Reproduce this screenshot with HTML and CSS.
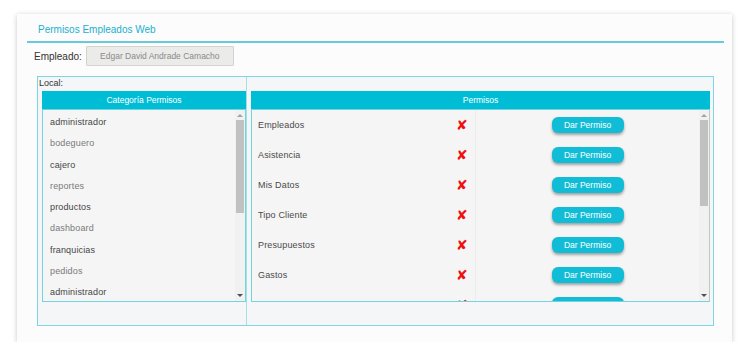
FILE: index.html
```html
<!DOCTYPE html>
<html lang="es">
<head>
  <meta charset="UTF-8" />
  <title>Permisos Empleados Web</title>
  <link rel="stylesheet" href="styles.css">
</head>
<body>

  <div class="card">
    <div class="card-title">Permisos Empleados Web</div>

    <div class="employee-row">
      <span class="employee-label">Empleado:</span>
      <button class="employee-btn">Edgar David Andrade Camacho</button>
    </div>

    <div class="local-box">
      <div class="col col-left">
        <div class="local-label">Local:</div>
        <div class="panel-head">Categoría Permisos</div>
        <div class="list list-cats">
          <div class="list-body">
            <div class="cat">administrador</div>
            <div class="cat">bodeguero</div>
            <div class="cat">cajero</div>
            <div class="cat">reportes</div>
            <div class="cat">productos</div>
            <div class="cat">dashboard</div>
            <div class="cat">franquicias</div>
            <div class="cat">pedidos</div>
            <div class="cat">administrador</div>
          </div>
          <div class="scrollbar">
            <span class="arrow-up"></span>
            <div class="track"><div class="thumb thumb-cats"></div></div>
            <span class="arrow-down"></span>
          </div>
        </div>
      </div>

      <div class="col col-right">
        <div class="panel-head">Permisos</div>
        <div class="list list-perms">
          <div class="list-body">
            <div class="perm-row">
              <span class="perm-name">Empleados</span>
              <span class="perm-state">&#10008;</span>
              <span class="perm-action"><button class="give-btn">Dar Permiso</button></span>
            </div>
            <div class="perm-row">
              <span class="perm-name">Asistencia</span>
              <span class="perm-state">&#10008;</span>
              <span class="perm-action"><button class="give-btn">Dar Permiso</button></span>
            </div>
            <div class="perm-row">
              <span class="perm-name">Mis Datos</span>
              <span class="perm-state">&#10008;</span>
              <span class="perm-action"><button class="give-btn">Dar Permiso</button></span>
            </div>
            <div class="perm-row">
              <span class="perm-name">Tipo Cliente</span>
              <span class="perm-state">&#10008;</span>
              <span class="perm-action"><button class="give-btn">Dar Permiso</button></span>
            </div>
            <div class="perm-row">
              <span class="perm-name">Presupuestos</span>
              <span class="perm-state">&#10008;</span>
              <span class="perm-action"><button class="give-btn">Dar Permiso</button></span>
            </div>
            <div class="perm-row">
              <span class="perm-name">Gastos</span>
              <span class="perm-state">&#10008;</span>
              <span class="perm-action"><button class="give-btn">Dar Permiso</button></span>
            </div>
            <div class="perm-row">
              <span class="perm-name">Mi Perfil</span>
              <span class="perm-state">&#10008;</span>
              <span class="perm-action"><button class="give-btn">Dar Permiso</button></span>
            </div>
          </div>
          <div class="scrollbar">
            <span class="arrow-up"></span>
            <div class="track"><div class="thumb thumb-perms"></div></div>
            <span class="arrow-down"></span>
          </div>
        </div>
      </div>
    </div>
  </div>

</body>
</html>
```

FILE: styles.css
```css
body {
  margin: 0;
  background: #ffffff;
  font-family: "Liberation Sans", Arial, sans-serif;
  color: #333;
}

.card {
  width: 705px;
  margin: 14px 0 0 17px;
  padding: 0 0 16px 10px;
  background: #fcfcfc;
  box-shadow: 0 1px 5px rgba(0, 0, 0, 0.22);
}

.card-title {
  width: 686px;
  padding: 9px 0 5px 11px;
  font-size: 10px;
  line-height: 13px;
  color: #19b0cf;
  border-bottom: 2px solid #66cbdc;
}

.employee-row {
  display: flex;
  align-items: center;
  gap: 4px;
  margin-top: 3px;
  padding-left: 7px;
  height: 20px;
}

.employee-label {
  font-size: 10px;
  color: #333;
}

.employee-btn {
  width: 148px;
  height: 20px;
  padding: 0;
  font-family: inherit;
  font-size: 8.5px;
  color: #8a8a8a;
  background: #ebebe9;
  border: 1px solid #d2d2d0;
  border-radius: 1px;
}

/* caja Local */
.local-box {
  display: grid;
  grid-template-columns: 209px 1fr;
  width: 675px;
  margin: 10px 0 0 10px;
  background: #f4f6f7;
  border: 1px solid #7dd6e2;
}

.col {
  padding-bottom: 23px;
}

.col-left {
  border-right: 1px solid #a6dfe8;
}

.col-right {
  padding-top: 14px;
  padding-right: 3px;
}

.local-label {
  height: 14px;
  padding-left: 1px;
  font-size: 9px;
  line-height: 13px;
  color: #333;
}

.panel-head {
  height: 18px;
  margin-left: 4px;
  background: #00bdd6;
  color: #fff;
  font-size: 8.5px;
  line-height: 18px;
  text-align: center;
}

.col-left .panel-head,
.col-left .list {
  width: 204px;
}

.list {
  display: flex;
  height: 193px;
  margin-left: 4px;
  box-sizing: border-box;
  background: #f5f5f5;
  border: 1px solid #74d3e0;
  overflow: hidden;
}

.list-perms {
  border-right-color: #c4c4c4;
}

.list-body {
  flex: 1;
  overflow: hidden;
}

.list-cats .list-body {
  padding-top: 2px;
}

.cat {
  height: 21.3px;
  line-height: 21.3px;
  padding-left: 7px;
  font-size: 9px;
  letter-spacing: 0.15px;
  color: #454545;
}

.cat:nth-child(even) {
  color: #7a7a7a;
}

.perm-row {
  display: grid;
  grid-template-columns: 1fr 24px 224px;
  height: 30px;
  align-items: center;
}

.perm-name {
  padding-left: 6px;
  font-size: 9px;
  letter-spacing: 0.15px;
  color: #4a4a4a;
}

.perm-state {
  font-family: "DejaVu Sans", sans-serif;
  font-size: 14px;
  line-height: 30px;
  color: #f01010;
  padding-left: 5px;
}

.perm-action {
  display: flex;
  justify-content: center;
  align-items: center;
  height: 30px;
  border-left: 1px solid #ececec;
}

.give-btn {
  width: 72px;
  height: 16px;
  padding: 0;
  font-family: inherit;
  font-size: 8.5px;
  color: #fff;
  background: #11bdd6;
  border: none;
  border-radius: 6px;
  box-shadow: 0 2px 3px rgba(0, 0, 0, 0.35);
}

/* barra de desplazamiento */
.scrollbar {
  display: flex;
  flex-direction: column;
  align-items: center;
  width: 10px;
  background: #f1f1f1;
}

.track {
  flex: 1;
  width: 8px;
}

.thumb {
  width: 8px;
  background: #c1c1c1;
}

.thumb-cats {
  height: 93px;
}

.thumb-perms {
  height: 86px;
}

.arrow-up,
.arrow-down {
  width: 0;
  height: 0;
  margin: 4px 0 3px;
  border-left: 3px solid transparent;
  border-right: 3px solid transparent;
}

.arrow-up {
  border-bottom: 3px solid #a3a3a3;
}

.arrow-down {
  border-top: 3px solid #505050;
  margin: 3px 0 4px;
}
```
